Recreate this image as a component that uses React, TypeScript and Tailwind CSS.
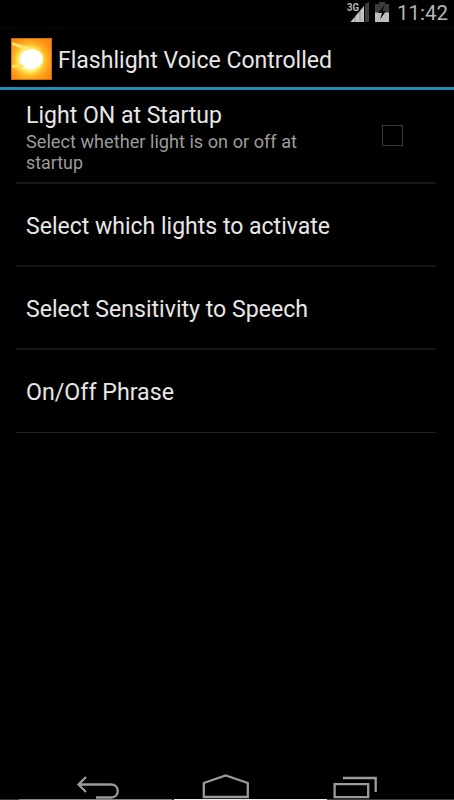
export default function App() {
  return (
    <div className="flex h-[800px] w-[454px] flex-col overflow-hidden bg-black font-[Roboto,sans-serif] text-[#e6e6e6]">
      <StatusBar />
      <ActionBar />
      <main className="flex-1 pl-4 pr-[18px]">
        <div className="flex h-[94px] border-b-2 border-[#161616] pl-[10px]">
          <div className="w-[290px] pt-[10.5px]">
            <FitText text="Light ON at Startup" width={196} size={23} height={28} />
            <div className="pt-[2.5px] text-[#9c9c9c]">
              <FitText text="Select whether light is on or off at" width={271} size={18} height={21} />
              <FitText text="startup" width={57} size={18} height={21} />
            </div>
          </div>
          <div className="ml-[66px] mt-[35px] h-[21px] w-[21px] border border-[#3c3c3c]" />
        </div>
        <PreferenceRow text="Select which lights to activate" width={304} />
        <PreferenceRow text="Select Sensitivity to Speech" width={282} />
        <PreferenceRow text="On/Off Phrase" width={148} />
      </main>
      <NavigationBar />
    </div>
  );
}

function PreferenceRow({ text, width }: { text: string; width: number }) {
  return (
    <div className="h-[83px] border-b-2 border-[#161616] pl-[10px] pt-[28px] last:border-b last:border-[#222222]">
      <FitText text={text} width={width} size={23} height={28} />
    </div>
  );
}

// One line of text set to an exact advance width
function FitText({ text, width, size, height }: { text: string; width: number; size: number; height: number }) {
  return (
    <svg width={width + 2} height={height} className="block overflow-visible" fill="currentColor">
      <text x="0" y={Math.round(height * 0.79)} fontSize={size} textLength={width} lengthAdjust="spacingAndGlyphs">
        {text}
      </text>
    </svg>
  );
}

function StatusBar() {
  return (
    <div className="flex h-7 items-start justify-end pr-1">
      <svg width="24" height="24" className="mr-1 overflow-visible">
        <text x="0" y="10.8" fontSize="11.3" fontWeight="700" fill="#b8b8b8" textLength="12" lengthAdjust="spacingAndGlyphs">3G</text>
        <path d="M18 4L22 2V22H18Z" fill="#3b3f3c" />
        <path d="M3.5 22L17 6V22Z" fill="#8f8f8f" />
        <path d="M3.5 22L7.5 17.5V22ZM8.5 16L12.5 11.5V22H8.5ZM13.5 10.5L17 6V22H13.5Z" fill="#c4c4c4" />
      </svg>
      <svg width="14" height="24" className="mr-2">
        <path d="M4 2H10V4H14V13H0V4H4Z" fill="#3b3f3c" />
        <path d="M0 12.5H14V22H0Z" fill="#bdbdbd" />
        <path d="M10 4.5L3 13H7L5 19.5L11 11H7.5Z" fill="#0b0b0b" />
      </svg>
      <div className="text-[#b5b5b5]">
        <FitText text="11:42" width={51} size={21} height={25} />
      </div>
    </div>
  );
}

function ActionBar() {
  return (
    <header className="flex h-[62px] border-b-[3px] border-t border-b-[#278ab6] border-t-[#080808] pl-[11px]">
      <div className="pt-[9px]">
        <SunIcon />
      </div>
      <div className="ml-[6px] pt-[17px]">
        <FitText text="Flashlight Voice Controlled" width={274} size={23} height={28} />
      </div>
    </header>
  );
}

function SunIcon() {
  return (
    <svg width="41" height="42" viewBox="0 0 41 42" className="block">
      <defs>
        <radialGradient id="sun" gradientUnits="userSpaceOnUse" cx="19" cy="22" r="25">
          <stop offset="0.38" stopColor="#fff9b0" />
          <stop offset="0.5" stopColor="#ffe04e" />
          <stop offset="0.65" stopColor="#ffb726" />
          <stop offset="0.8" stopColor="#ff9c1a" />
          <stop offset="1" stopColor="#fb8a0c" />
        </radialGradient>
        <filter id="soft" x="-20%" y="-50%" width="140%" height="200%">
          <feGaussianBlur stdDeviation="0.7" />
        </filter>
      </defs>
      <path d="M0 0H41V42H0Z" fill="url(#sun)" />
      <g filter="url(#soft)">
        <path d="M1 4L18 9L25 12L13 12L1 7Z" fill="#ffe368" />
        <path d="M1 27L11 26L14 29L1 30Z" fill="#ffe05a" />
      </g>
      <ellipse cx="20.5" cy="21" rx="11.5" ry="10" fill="#fffffb" filter="url(#soft)" />
      <path d="M.5 .5H40.5V41.5H.5Z" fill="none" stroke="#a85b0b" strokeOpacity="0.6" />
    </svg>
  );
}

function NavigationBar() {
  return (
    <nav className="flex h-[30px] flex-col">
      <svg width="454" height="29" viewBox="0 770 454 29" fill="none" stroke="#9b9b9b" strokeWidth="2.3">
        <path d="M86 777L78.5 784.5L86 792M79 784.5H111C120 784.5 120 797.5 111 797.5H96" />
        <path d="M203.8 797V783L225.7 775.5L247.8 783V797Z" />
        <path d="M334.6 784.2H368.2V797.2H334.6ZM343 778H375.7V792" />
      </svg>
      <div className="flex h-px">
        <div className="w-[19px] bg-[#343934]" />
        <div className="w-[153px] bg-[#7e8b7e]" />
        <div className="w-[2px] bg-[#343934]" />
        <div className="w-[153px] bg-[#f1eeee]" />
        <div className="flex-1 bg-[#3b443b]" />
      </div>
    </nav>
  );
}
